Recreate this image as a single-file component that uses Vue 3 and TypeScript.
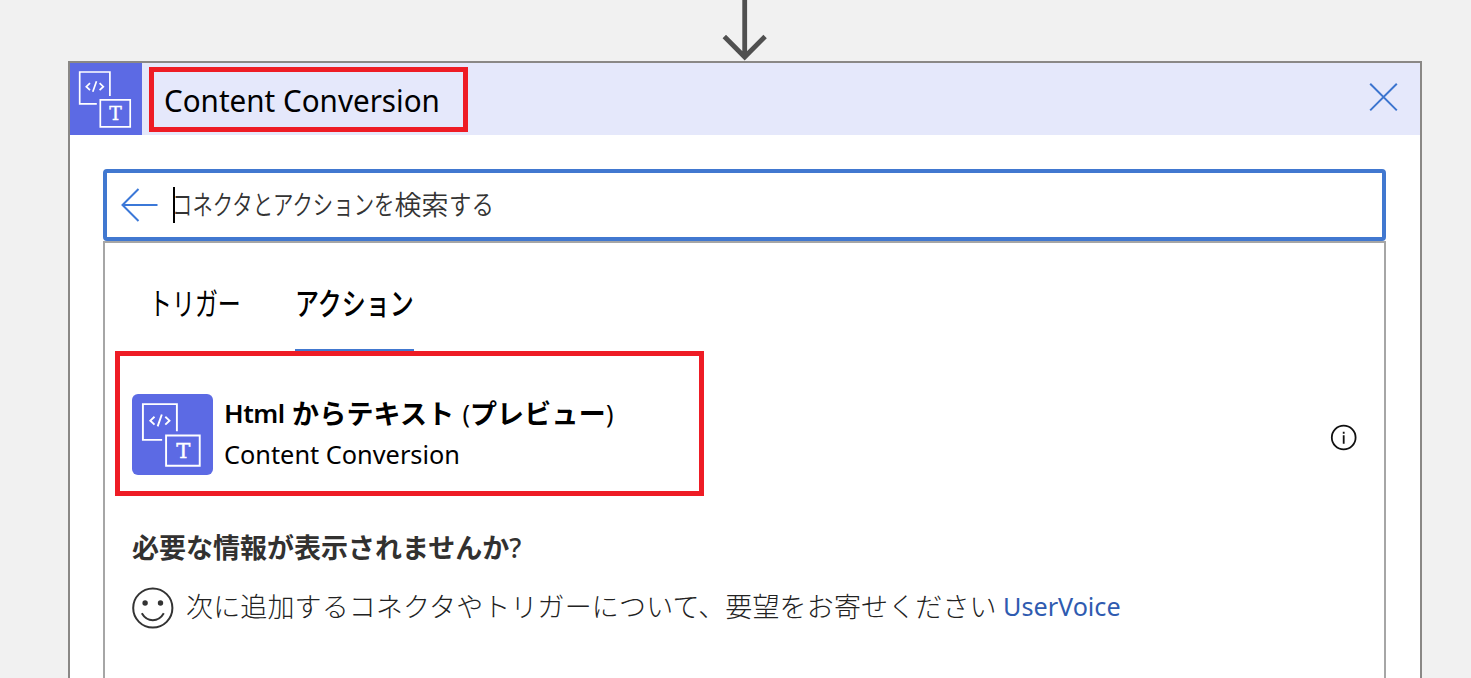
<script setup lang="ts">
import { h, type FunctionalComponent } from 'vue'

interface Tab {
  id: string
  label: string
  active: boolean
}

const tabs: Tab[] = [
  { id: 'trigger', label: 'トリガー', active: false },
  { id: 'action', label: 'アクション', active: true },
]

const ConversionIcon: FunctionalComponent = () =>
  h('svg', { viewBox: '0 0 72 72', fill: 'none', stroke: '#fff', 'stroke-width': 1.7 }, [
    h('path', { d: 'M39.9 33V9H9.7V40.8H26.8' }),
    h('path', { d: 'M30.3 36.9H60.2V63.8H30.3Z' }),
    h('path', { d: 'M20 20.2L16.3 23.7L20 27.2M29.6 20.2L33.3 23.7L29.6 27.2M26.5 18.2L22.8 28.8' }),
    h(
      'text',
      {
        x: 45.6,
        y: 57.2,
        'text-anchor': 'middle',
        'font-family': 'DejaVu Serif, serif',
        'font-size': 18.8,
        fill: '#fff',
        stroke: '#fff',
        'stroke-width': 0.35,
      },
      'T',
    ),
  ])
</script>

<template>
  <main class="canvas">
    <div class="connector">
      <svg width="46" height="61" viewBox="0 0 46 61" fill="none" stroke="#505050" stroke-width="4.8">
        <path d="M22.7 0V57M2.3 36.5L22.7 57L43.1 36.5" />
      </svg>
    </div>

    <section class="card">
      <header class="card-header">
        <ConversionIcon class="header-icon" />
        <div class="title-mark"><span class="title">Content Conversion</span></div>
        <svg class="close" width="29" height="29" viewBox="0 0 29 29" stroke="#3b74cf" stroke-width="2">
          <path d="M1.2 0.8L27.8 27.4M27.8 0.8L1.2 27.4" />
        </svg>
      </header>

      <div class="card-body">
        <div class="search">
          <svg width="37" height="34" viewBox="0 0 37 34" fill="none" stroke="#3b78d8" stroke-width="2">
            <path d="M36.5 17H2M17.5 1L1.5 17L17.5 33" />
          </svg>
          <i class="caret"></i>
          <span class="placeholder"><span class="kana k11">コネクタとアクションを</span>検索<span class="kana k2">する</span></span>
        </div>

        <div class="results">
          <nav class="tabs">
            <div v-for="tab in tabs" :key="tab.id" class="tab" :class="[tab.id, { active: tab.active }]">
              <span>{{ tab.label }}</span>
            </div>
          </nav>

          <div class="action-row">
            <div class="action-mark">
              <ConversionIcon class="action-icon" />
              <div class="action-text">
                <div class="action-name"><span class="html">Html</span><b>からテキスト</b><span class="paren open">(</span><b>プレビュー</b><span class="paren">)</span></div>
                <div class="action-sub">Content Conversion</div>
              </div>
            </div>
            <svg class="info" width="28" height="28" viewBox="0 0 28 28" fill="none" stroke="#111" stroke-width="1.8">
              <circle cx="13.7" cy="13.5" r="11.9" />
              <path d="M13.7 11.3V19.7M13.7 7.7V9.7" />
            </svg>
          </div>

          <h2 class="question">必要な情報が表示されませんか<span>?</span></h2>
          <div class="feedback">
            <svg width="42" height="42" viewBox="0 0 42 42" fill="none" stroke="#333" stroke-width="2">
              <circle cx="20.8" cy="21" r="19.6" />
              <circle cx="13.1" cy="16" r="2.7" fill="#333" stroke="none" />
              <circle cx="28.5" cy="16" r="2.7" fill="#333" stroke="none" />
              <path d="M9.8 26.2C15.3 35.5 26.3 35.5 31.8 26.2" />
            </svg>
            <span class="feedback-text">次に追加するコネクタやトリガーについて、要望をお寄せください</span>
            <a class="link">UserVoice</a>
          </div>
        </div>
      </div>
    </section>
  </main>
</template>

<style>
body {
  background: #f1f1f1;
}
</style>

<style scoped>
.canvas {
  box-sizing: border-box;
  height: 678px;
  overflow: hidden;
  background: #f1f1f1;
  font-family: "Noto Sans", "Noto Sans CJK JP", sans-serif;
  color: #000;
}
.canvas * {
  box-sizing: border-box;
}
svg {
  display: block;
  flex: none;
}
.connector {
  height: 61px;
  padding-left: 721.5px;
}
.card {
  width: 1354px;
  height: 640px;
  margin-left: 68px;
  border: 2px solid #8a8886;
  background: #fff;
}
.card-header {
  display: flex;
  height: 72px;
  background: #e5e8fb;
}
.header-icon {
  width: 72px;
  height: 72px;
  background: #5c6ae4;
}
.title-mark {
  display: flex;
  align-items: center;
  width: 319px;
  height: 65px;
  margin: 4px 0 0 7px;
  padding-left: 10px;
  border: 5px solid #ee1c25;
}
.title {
  font-size: 31px;
  line-height: 40px;
  white-space: nowrap;
  transform: scaleX(0.955);
  transform-origin: left;
}
.close {
  margin: 20px 22px 0 auto;
}
.card-body {
  padding: 34px 34px 0 33px;
}
.search {
  display: flex;
  align-items: center;
  height: 72px;
  padding-left: 14px;
  border: 4px solid #4178d0;
  border-radius: 4px;
}
.caret {
  width: 2px;
  height: 36px;
  margin-left: 15px;
  background: #000;
}
.placeholder {
  font-family: "Noto Sans CJK JP", sans-serif;
  font-size: 27px;
  font-weight: 350;
  line-height: 40px;
  color: #333;
  white-space: nowrap;
  margin: -2px 0 0 -3px;
}
.kana {
  display: inline-block;
  transform: scaleX(0.755);
  transform-origin: left;
}
.k11 {
  margin-right: -72px;
}
.k2 {
  transform: scaleX(0.83);
  margin-right: -9px;
}
.results {
  height: 460px;
  border: 2px solid #a6a6a6;
}
.tabs {
  display: flex;
  gap: 55px;
  height: 109px;
  padding-left: 46px;
}
.tab {
  display: flex;
  align-items: center;
  height: 109px;
  padding-top: 12px;
  border-bottom: 3px solid transparent;
  font-family: "Noto Sans CJK JP", sans-serif;
  font-size: 31px;
  line-height: 40px;
  white-space: nowrap;
}
.tab span {
  transform-origin: left;
}
.trigger {
  width: 89px;
  font-weight: 400;
}
.trigger span {
  margin-left: -2px;
  transform: scaleX(0.74);
}
.action {
  width: 119px;
  font-weight: 500;
}
.action span {
  transform: scaleX(0.774);
}
.active {
  border-bottom-color: #4178d0;
}
.action-row {
  display: flex;
  justify-content: space-between;
  height: 145px;
  margin-top: -1px;
  padding: 0 26px 0 10px;
}
.action-mark {
  position: relative;
  display: flex;
  width: 589px;
  height: 145px;
  padding: 38px 0 0 12px;
  border: 5px solid #ee1c25;
}
.action-icon {
  width: 81px;
  height: 81px;
  border-radius: 6px;
  background: #5c6ae4;
}
.action-text {
  margin: -1px 0 0 11px;
  white-space: nowrap;
}
.action-name {
  display: flex;
  height: 41px;
  font-size: 27px;
  line-height: 40px;
}
.action-name b {
  font-family: "Noto Sans CJK JP", sans-serif;
  font-weight: 700;
  letter-spacing: 0.2px;
}
.html {
  width: 68px;
  font-size: 26px;
  font-weight: 600;
}
.html::first-line {
  letter-spacing: -0.5px;
}
.paren {
  font-size: 25px;
}
.open {
  padding-left: 8px;
}
.action-sub {
  font-size: 26.3px;
  line-height: 40px;
  transform: scaleX(0.963);
  transform-origin: left;
}
.info {
  margin-top: 73px;
}
.question {
  margin: 31px 0 0 27px;
  font-family: "Noto Sans CJK JP", sans-serif;
  font-size: 27px;
  font-weight: 700;
  line-height: 40px;
  color: #323130;
  white-space: nowrap;
}
.question span {
  font-family: "Noto Sans", sans-serif;
  font-weight: 500;
}
.feedback {
  display: flex;
  align-items: center;
  height: 42px;
  margin: 19px 0 0 27px;
  white-space: nowrap;
}
.feedback-text {
  margin: -5px 0 0 12px;
  font-family: "Noto Sans CJK JP", sans-serif;
  font-size: 27px;
  font-weight: 300;
  letter-spacing: 0.13px;
  line-height: 40px;
  color: #222;
}
.link {
  margin: -4px 0 0 6px;
  font-size: 26px;
  line-height: 40px;
  color: #2f5bb0;
  transform: scaleX(0.968);
  transform-origin: left;
}
</style>
